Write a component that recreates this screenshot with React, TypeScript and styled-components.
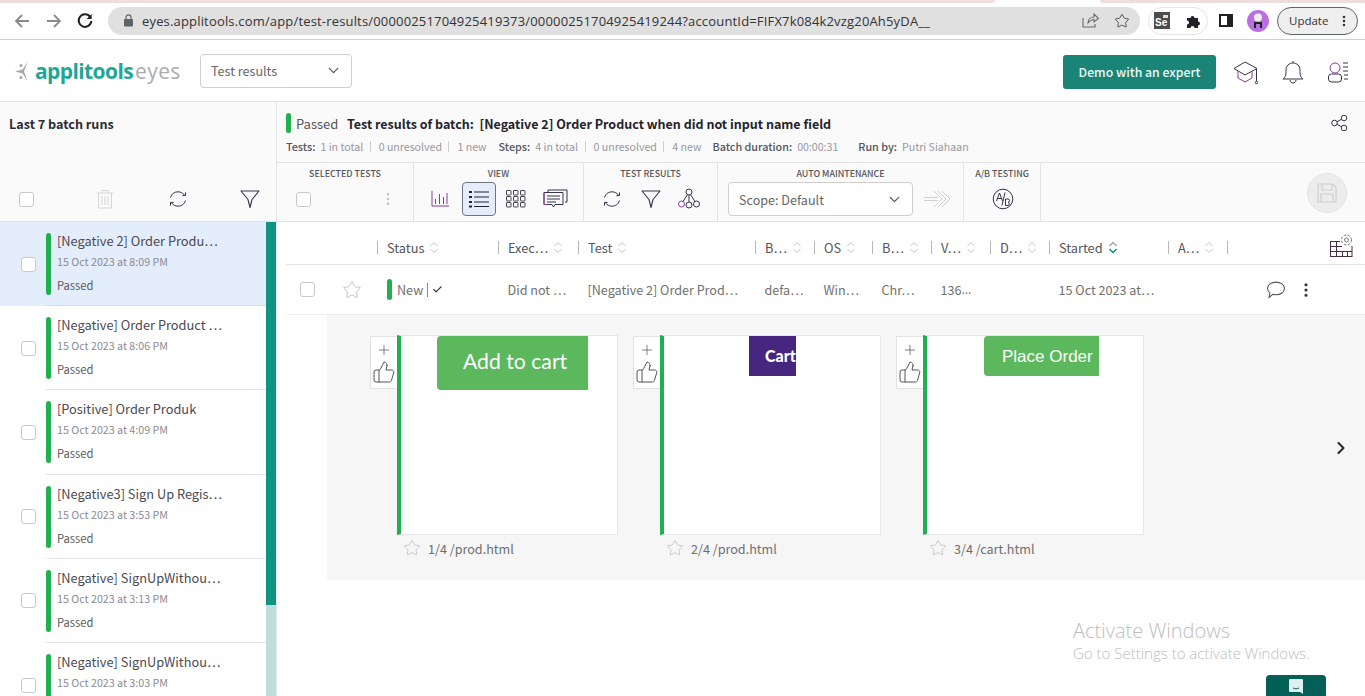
import React from "react";
import styled, { createGlobalStyle } from "styled-components";
import { Star, ChevronDown, ChevronRight, MoreVertical, Check, Plus, ThumbsUp } from "lucide-react";

const GlobalStyle = createGlobalStyle`
  html, body { margin: 0; padding: 0; background: #fff; }
  * { box-sizing: border-box; }
  body { font-family: "Noto Sans CJK KR", "Noto Sans", sans-serif; }
`;

const Page = styled.div`
  position: relative;
  width: 1365px;
  height: 696px;
  overflow: hidden;
  display: flex;
  flex-direction: column;
  color: #444;
`;

/* browser chrome */
const ChromeBar = styled.div`
  position: relative;
  height: 40px;
  flex: none;
  display: flex;
  align-items: center;
  padding: 3px 7px 1px 12px;
  border-bottom: 1px solid #d0d0d0;
  background: #fff;
  font-family: "Open Sans", sans-serif;
  & > * { flex: none; }
`;
const PinkStrip = styled.div<{ $left: number; $width: number; $radius: string }>`
  position: absolute;
  top: 0;
  left: ${(p) => p.$left}px;
  width: ${(p) => p.$width}px;
  height: 3px;
  background: #efdcdc;
  border-radius: ${(p) => p.$radius};
`;
const NavSlot = styled.span`
  width: 32px;
  height: 20px;
  display: flex;
  align-items: center;
`;
const AddressPill = styled.div`
  width: 1032px;
  height: 28px;
  border-radius: 14px;
  background: #e0e0e0;
  display: flex;
  align-items: center;
  padding: 0 10px 0 15px;
`;
const UrlText = styled.span`
  margin-left: 8px;
  font-family: "Open Sans", sans-serif;
  font-size: 13px;
  letter-spacing: 0.17px;
  color: #333;
  white-space: nowrap;
`;
const PillIcons = styled.div`
  margin-left: auto;
  display: flex;
  align-items: center;
  gap: 15px;
`;
const ExtensionPill = styled.div`
  width: 60px;
  height: 28px;
  margin-left: 8px;
  border: 1px solid #e4e4e4;
  border-radius: 14px;
  display: flex;
  align-items: center;
  justify-content: space-between;
  padding: 0 5px 0 5px;
`;
const SeBadge = styled.span`
  position: relative;
  width: 16px;
  height: 17px;
  background: #4d4d4d;
  color: #fff;
  font: bold 10px/1 "Liberation Sans", sans-serif;
  display: flex;
  align-items: flex-end;
  padding: 0 0 1px 1px;
  &::after {
    content: "";
    position: absolute;
    top: 3px;
    right: 2px;
    width: 5px;
    height: 3px;
    background: #ddd;
  }
`;
const SideIcon = styled.span`
  width: 14px;
  height: 13px;
  margin-left: 11px;
  border: 2px solid #202124;
  border-right-width: 6px;
  display: block;
`;
const Avatar = styled.span`
  width: 22px;
  height: 22px;
  margin-left: 14px;
  border-radius: 50%;
  background: #b96fe0;
  display: flex;
  align-items: center;
  justify-content: center;
`;
const UpdatePill = styled.div`
  width: 81px;
  height: 28px;
  margin-left: 8px;
  border: 1px solid #5f6368;
  border-radius: 14px;
  background: #efefef;
  display: flex;
  align-items: center;
  padding-left: 11px;
  font-size: 11.5px;
  color: #333;
  gap: 9px;
`;

/* app header */
const AppHeader = styled.header`
  height: 62px;
  flex: none;
  display: flex;
  align-items: center;
  padding: 2px 16px 0 15px;
  border-bottom: 1px solid #e6e6e6;
`;
const Logo = styled.div`
  width: 185px;
  display: flex;
  align-items: center;
  font-family: "Open Sans", sans-serif;
  font-size: 21px;
  line-height: 1;
`;
const LogoStrong = styled.span`
  margin-left: 7px;
  color: #1fa796;
  font-weight: 700;
  letter-spacing: -0.6px;
`;
const LogoLight = styled.span`
  margin-left: 2px;
  color: #a9adaf;
  font-weight: 400;
  letter-spacing: 0.4px;
`;
const SelectBox = styled.div<{ $width: number }>`
  width: ${(p) => p.$width}px;
  height: 34px;
  flex: none;
  border: 1px solid #cfcfcf;
  border-radius: 4px;
  background: #fff;
  display: flex;
  align-items: center;
  justify-content: space-between;
  padding: 0 9px 0 10px;
  font-size: 12.6px;
  color: #666;
`;
const HeaderSelect = styled(SelectBox)`
  margin-top: -2px;
`;
const DemoButton = styled.button`
  margin-left: auto;
  width: 153px;
  height: 34px;
  border: none;
  border-radius: 3px;
  background: #1a8577;
  color: #eafaf7;
  font-family: inherit;
  font-size: 12.3px;
  font-weight: 500;
`;
const HeaderIcons = styled.div`
  margin-left: 17px;
  display: flex;
  align-items: center;
  gap: 23px;
`;

/* body */
const Body = styled.div`
  flex: 1;
  min-height: 0;
  display: flex;
`;
const Sidebar = styled.aside`
  width: 277px;
  flex: none;
  display: flex;
  flex-direction: column;
  border-right: 1px solid #e4e4e4;
`;
const SidebarTop = styled.div`
  height: 120px;
  flex: none;
  background: #fafafa;
  border-bottom: 1px solid #e4e4e4;
  padding: 12px 0 0 9px;
  display: flex;
  flex-direction: column;
`;
const SidebarTitle = styled.div`
  font-size: 12.6px;
  line-height: 20px;
  font-weight: 700;
  color: #2b2b33;
`;
const SidebarTools = styled.div`
  margin-top: auto;
  height: 44px;
  display: flex;
  align-items: center;
  padding-left: 10px;
`;
const ToolSlot = styled.span<{ $gap: number }>`
  display: flex;
  flex: none;
  margin-left: ${(p) => p.$gap}px;
`;
const Checkbox = styled.span`
  display: block;
  width: 15px;
  height: 15px;
  flex: none;
  border: 1px solid #c9c9c9;
  border-radius: 3px;
  background: #fff;
`;
const BatchScroller = styled.div`
  flex: 1;
  min-height: 0;
  display: flex;
  overflow: hidden;
`;
const BatchList = styled.div`
  width: 266px;
  flex: none;
`;
const ScrollTrack = styled.div`
  width: 10px;
  background: #bfdedb;
`;
const ScrollThumb = styled.div`
  height: 383px;
  background: #119383;
`;
const BatchRow = styled.div<{ $active?: boolean }>`
  position: relative;
  height: 84.2px;
  display: flex;
  align-items: center;
  padding-left: 21px;
  background: ${(p) => (p.$active ? "#e3edfb" : "#fff")};
`;
const BatchBody = styled.div<{ $active?: boolean }>`
  height: 100%;
  flex: 1;
  margin-left: 10px;
  padding: 11px 0 0 0;
  display: flex;
  border-bottom: 1px solid ${(p) => (p.$active ? "#d5dde8" : "#e6e6e6")};
`;
const StatusBar = styled.span<{ $height: number }>`
  display: block;
  width: 5px;
  height: ${(p) => p.$height}px;
  flex: none;
  border-radius: 3px;
  background: #1fb14f;
`;
const BatchText = styled.div`
  margin: -1px 0 0 6px;
`;
const BatchName = styled.div`
  font-size: 12.8px;
  line-height: 18px;
  color: #4a4a52;
  white-space: nowrap;
`;
const BatchDate = styled.div`
  margin-top: 4px;
  font-size: 10.7px;
  line-height: 16px;
  color: #8b8b93;
`;
const BatchStatus = styled.div`
  margin-top: 7px;
  font-size: 11.2px;
  line-height: 16px;
  color: #5c5c5c;
`;

const Content = styled.main`
  flex: 1;
  min-width: 0;
  display: flex;
  flex-direction: column;
`;
const BatchHeader = styled.div`
  position: relative;
  height: 61px;
  flex: none;
  background: #fafafa;
  padding: 11px 0 0 9px;
  border-bottom: 1px solid #e4e4e4;
`;
const HeaderLine = styled.div`
  display: flex;
  align-items: center;
  height: 20px;
`;
const PassedLabel = styled.span`
  margin-left: 5px;
  width: 51px;
  font-size: 13px;
  color: #555;
`;
const BatchTitle = styled.span`
  font-size: 12.5px;
  font-weight: 700;
  color: #23232b;
  white-space: pre;
`;
const ShareSlot = styled.span`
  position: absolute;
  top: 13px;
  right: 17px;
  display: flex;
`;
const StatsLine = styled.div`
  display: flex;
  align-items: center;
  margin-top: 4px;
  height: 18px;
  white-space: nowrap;
`;
const StatKey = styled.span<{ $gap?: number }>`
  font-size: 10.8px;
  font-weight: 500;
  color: #55555c;
  margin-left: ${(p) => p.$gap || 0}px;
`;
const StatValue = styled.span`
  margin-left: 5px;
  font-size: 10.6px;
  color: #98989f;
`;
const StatDivider = styled.span`
  width: 1px;
  height: 11px;
  margin: 0 3px 0 6.5px;
  background: #cfcfcf;
`;

const Toolbar = styled.div`
  height: 59px;
  flex: none;
  display: flex;
  background: #fafafa;
  border-bottom: 1px solid #e4e4e4;
`;
const ToolSection = styled.section<{ $width: number }>`
  width: ${(p) => p.$width}px;
  flex: none;
  display: flex;
  flex-direction: column;
  align-items: center;
  border-right: 1px solid #e4e4e4;
  padding-top: 4px;
`;
const ToolLabel = styled.div`
  font-size: 8.9px;
  line-height: 14px;
  font-weight: 500;
  color: #55555c;
  white-space: nowrap;
`;
const ToolIcons = styled.div<{ $start?: boolean; $shift?: number }>`
  margin-top: 1px;
  height: 34px;
  width: 100%;
  display: flex;
  align-items: center;
  justify-content: ${(p) => (p.$start ? "flex-start" : "center")};
  padding-left: ${(p) => (p.$start ? 19 : Math.max(p.$shift || 0, 0))}px;
  padding-right: ${(p) => Math.max(-(p.$shift || 0), 0)}px;
`;
const ToolIconButton = styled.span<{ $selected?: boolean; $gap?: number }>`
  width: 34px;
  height: 34px;
  margin-left: ${(p) => p.$gap || 0}px;
  display: flex;
  align-items: center;
  justify-content: center;
  border-radius: 4px;
  border: 1px solid ${(p) => (p.$selected ? "#6f7580" : "transparent")};
  background: ${(p) => (p.$selected ? "#e3edfb" : "transparent")};
`;
const SaveCircle = styled.span`
  width: 40px;
  height: 40px;
  margin: 10px 0 0 266px;
  border-radius: 50%;
  background: #ececec;
  border: 1px solid #e4e4e4;
  display: flex;
  align-items: center;
  justify-content: center;
`;

const COLUMNS = "91px 121px 80px 177px 59px 58px 59px 59px 59px 119px 59px 1fr";
const TableHead = styled.div`
  margin-left: 9px;
  height: 43px;
  flex: none;
  display: grid;
  grid-template-columns: ${COLUMNS};
  align-items: center;
  border-bottom: 1px solid #e4e4e4;
  padding-top: 8px;
`;
const HeadCell = styled.div<{ $plain?: boolean }>`
  display: flex;
  align-items: center;
  gap: 5px;
  height: 13px;
  padding-left: 9px;
  border-left: ${(p) => (p.$plain ? "none" : "1px solid #b8b8b8")};
  font-size: 12.8px;
  color: #55555c;
  white-space: nowrap;
`;
const TableRow = styled.div`
  margin-left: 9px;
  height: 50px;
  flex: none;
  display: grid;
  grid-template-columns: ${COLUMNS};
  align-items: center;
  border-bottom: 1px solid #ececec;
`;
const RowCell = styled.div`
  display: flex;
  align-items: center;
  padding-left: 9.5px;
  font-size: 12.6px;
  color: #6f6f6f;
  white-space: nowrap;
`;
const StatusCell = styled(RowCell)`
  padding-left: 10px;
`;
const LatinDots = styled.span`
  font-family: "Open Sans", sans-serif;
`;
const SelectCell = styled.div`
  display: flex;
  align-items: center;
  padding-left: 14px;
`;
const NewLabel = styled.span`
  margin-left: 5px;
  padding-right: 4px;
  border-right: 1px solid #8a8a8a;
  line-height: 14px;
`;
const CheckMark = styled.span`
  display: flex;
  margin-left: 4px;
`;
const RowActions = styled.div`
  display: flex;
  align-items: center;
  justify-content: flex-end;
  padding-right: 50px;
  gap: 11px;
`;
const GridSettings = styled.div`
  width: 100%;
  display: flex;
  justify-content: flex-end;
  padding-right: 12px;
  margin-top: -3px;
`;

const StepsPanel = styled.div`
  margin-left: 50px;
  height: 265px;
  flex: none;
  background: #f6f6f6;
  padding: 20px 0 0 43px;
  display: flex;
  gap: 15px;
`;
const StepItem = styled.div`
  display: flex;
  align-items: flex-start;
`;
const StepTools = styled.div`
  width: 27px;
  height: 53px;
  margin-top: 1px;
  border: 1px solid #e2e2e2;
  border-right: none;
  background: #fff;
  display: flex;
  flex-direction: column;
  align-items: center;
  padding-top: 5px;
  gap: 2px;
`;
const StepColumn = styled.div`
  width: 221px;
`;
const StepCard = styled.div`
  height: 200px;
  background: #fff;
  border: 1px solid #e8e8e8;
  border-left: 4px solid #1fb14f;
  overflow: hidden;
`;
const Shot = styled.div<{ $left: number; $width: number; $height: number; $bg: string }>`
  width: ${(p) => p.$width}px;
  height: ${(p) => p.$height}px;
  margin-left: ${(p) => p.$left}px;
  background: ${(p) => p.$bg};
  display: flex;
  align-items: center;
  overflow: hidden;
  color: #fff;
  white-space: nowrap;
`;
const RoundedShot = styled(Shot)`
  border-radius: 4px 0 0 4px;
`;
const ShotLabel = styled.span<{ $size: number; $pad: number; $font: string; $weight?: number; $lift: number }>`
  padding: ${(p) => Math.max(-p.$lift, 0)}px 0 ${(p) => Math.max(p.$lift, 0)}px ${(p) => p.$pad}px;
  font-family: ${(p) => p.$font};
  font-size: ${(p) => p.$size}px;
  font-weight: ${(p) => p.$weight || 400};
`;
const StepCaption = styled.div`
  margin: 4px 0 0 6px;
  display: flex;
  align-items: center;
  gap: 7px;
  height: 18px;
  font-size: 12.6px;
  color: #6e6e6e;
`;
const NextArrow = styled.span`
  position: absolute;
  left: 1331px;
  top: 438px;
  display: flex;
`;
const Watermark = styled.div`
  position: absolute;
  left: 1073px;
  top: 619px;
  font-family: "Open Sans", sans-serif;
  color: #bdbdbd;
`;
const WatermarkTitle = styled.div`
  font-size: 20px;
  line-height: 24px;
  font-weight: 300;
`;
const WatermarkText = styled.div`
  font-size: 15px;
  line-height: 21px;
  font-weight: 300;
  white-space: nowrap;
`;
const ChatTab = styled.div`
  position: absolute;
  left: 1266px;
  top: 675px;
  width: 60px;
  height: 21px;
  border-radius: 4px 4px 0 0;
  background: #045f57;
  display: flex;
  justify-content: center;
  padding-top: 3px;
`;

const INK = "#34344a";

function Sync() {
  return (
    <svg width="20" height="20" viewBox="0 0 20 20" fill="none" stroke={INK} strokeWidth="1">
      <path d="M2.5 8.5C3.4 5 6.4 2.8 10 2.8c2.7 0 5 1.2 6.5 3.4" />
      <path d="M17.5 3.4v3.2h-3.1" />
      <path d="M17.5 11.5c-.9 3.5-3.9 5.7-7.5 5.7-2.7 0-5-1.2-6.5-3.4" />
      <path d="M2.5 16.6v-3.2h3.1" />
    </svg>
  );
}
function Funnel() {
  return (
    <svg width="20" height="20" viewBox="0 0 20 20" fill="none" stroke={INK} strokeWidth="1.1">
      <path d="M1 2h18l-7 8.5-2 8-2-8z" strokeLinejoin="round" />
    </svg>
  );
}
function SortIcon({ active }: { active?: boolean }) {
  return (
    <svg width="10" height="13" viewBox="0 0 10 13" fill="none" strokeWidth={active ? 1.4 : 1}>
      <path d="M1.5 5 5 1.5 8.5 5" stroke={active ? "#9aa" : "#c4c4c4"} />
      <path d="M1.5 8 5 11.5 8.5 8" stroke={active ? "#0c8a7c" : "#c4c4c4"} />
    </svg>
  );
}
function StarOutline({ size }: { size: number }) {
  return <Star size={size} color="#bbb" strokeWidth={1} />;
}
function StepTool() {
  return (
    <StepTools>
      <Plus size={16} color="#444" strokeWidth={1} />
      <ThumbsUp size={24} color="#555" strokeWidth={1} />
    </StepTools>
  );
}

const batches = [
  { name: "[Negative 2] Order Produ…", date: "15 Oct 2023 at 8:09 PM", active: true },
  { name: "[Negative] Order Product …", date: "15 Oct 2023 at 8:06 PM" },
  { name: "[Positive] Order Produk", date: "15 Oct 2023 at 4:09 PM" },
  { name: "[Negative3] Sign Up Regis…", date: "15 Oct 2023 at 3:53 PM" },
  { name: "[Negative] SignUpWithou…", date: "15 Oct 2023 at 3:13 PM" },
  { name: "[Negative] SignUpWithou…", date: "15 Oct 2023 at 3:03 PM" },
];

const heads = ["Status", "Exec…", "Test", "B…", "OS", "B…", "V…", "D…"];

export default function App() {
  return (
    <Page>
      <GlobalStyle />
      <ChromeBar>
        <PinkStrip $left={0} $width={995} $radius="0 0 8px 0" />
        <PinkStrip $left={1100} $width={265} $radius="0 0 0 8px" />
        <NavSlot>
          <svg width="20" height="16" viewBox="0 0 20 16" fill="none" stroke="#8a8a8a" strokeWidth="1.8">
            <path d="M17 8H4M10 2 4 8l6 6" />
          </svg>
        </NavSlot>
        <NavSlot>
          <svg width="20" height="16" viewBox="0 0 20 16" fill="none" stroke="#8a8a8a" strokeWidth="1.8">
            <path d="M3 8h13M10 2l6 6-6 6" />
          </svg>
        </NavSlot>
        <NavSlot>
          <svg width="18" height="18" viewBox="0 0 18 18" fill="none" stroke="#222" strokeWidth="2">
            <path d="M14.5 5.5A6.3 6.3 0 1 0 15.3 9" />
            <path d="M15.6 2v5h-5z" fill="#222" stroke="none" />
          </svg>
        </NavSlot>
        <AddressPill>
          <svg width="11" height="13" viewBox="0 0 11 13" fill="#5f6368">
            <rect x="1" y="5" width="9" height="7.5" rx="1" />
            <path d="M3 5V3.4a2.5 2.5 0 0 1 5 0V5" fill="none" stroke="#5f6368" strokeWidth="1.2" />
          </svg>
          <UrlText>
            eyes.applitools.com/app/test-results/00000251704925419373/00000251704925419244?accountId=FIFX7k084k2vzg20Ah5yDA__
          </UrlText>
          <PillIcons>
            <svg width="17" height="15" viewBox="0 0 17 15" fill="none" stroke="#6a6a6a" strokeWidth="1.1">
              <path d="M1 5v9h12v-3M6 10c0-4 3-6 6-6V1l4.5 4.5L12 9V6.5C9.5 6.5 7.5 8 6 10z" />
            </svg>
            <Star size={16} color="#555" strokeWidth={1.5} />
          </PillIcons>
        </AddressPill>
        <ExtensionPill>
          <SeBadge>Se</SeBadge>
          <svg width="16" height="16" viewBox="0 0 16 16" fill="#202124">
            <path d="M1 5h3.500a2 2 0 1 1 4 0H12v3.500a2 2 0 1 1 0 4V15H8.500a2 2 0 1 0-4 0H1v-3.500a2 2 0 1 0 0-4z" />
          </svg>
        </ExtensionPill>
        <SideIcon />
        <Avatar>
          <svg width="12" height="16" viewBox="0 0 12 16">
            <circle cx="6" cy="4.5" r="4" fill="#eee" />
            <path d="M2 15V9h8v6H8v-4H4v4z" fill="#222" />
          </svg>
        </Avatar>
        <UpdatePill>
          Update
          <MoreVertical size={14} color="#333" strokeWidth={2.4} />
        </UpdatePill>
      </ChromeBar>

      <AppHeader>
        <Logo>
          <svg width="13" height="19" viewBox="0 0 13 19" fill="#a4a8a8">
            <path d="M12.500 0 7.500 7.500 0 9.500l7.500 2 5 7.500-3.500-9.500z" />
            <circle cx="6" cy="3.500" r="1.500" />
            <circle cx="6" cy="15.500" r="1.500" />
          </svg>
          <LogoStrong>applitools</LogoStrong>
          <LogoLight>eyes</LogoLight>
        </Logo>
        <HeaderSelect $width={152}>
          Test results
          <ChevronDown size={17} color="#555" strokeWidth={1.8} />
        </HeaderSelect>
        <DemoButton>Demo with an expert</DemoButton>
        <HeaderIcons>
          <svg width="26" height="26" viewBox="0 0 26 26" fill="none" stroke={INK} strokeWidth="1">
            <path d="M1 9.500 12 3l12 6.500L12 16z" />
            <path d="M5 12v7l7 4 7-4v-7" stroke="#8a3d96" />
            <path d="M23.500 10v12" />
            <circle cx="23.500" cy="23.500" r="1.200" />
          </svg>
          <svg width="22" height="24" viewBox="0 0 22 24" fill="none" stroke={INK} strokeWidth="1">
            <path d="M1 19c3-2 3-5 3-9 0-4 3-7 7-7s7 3 7 7c0 4 0 7 3 9z" />
            <path d="M8 20c0 4 6 4 6 0M11 1v2" />
          </svg>
          <svg width="22" height="22" viewBox="0 0 22 22" fill="none" stroke={INK} strokeWidth="1">
            <circle cx="8" cy="7" r="5" stroke="#8a3d96" />
            <rect x="1.500" y="13" width="13" height="8" rx="3" />
            <path d="M16 2h5M16 6h5M16 10h5M17 14h4M17 18h4" />
          </svg>
        </HeaderIcons>
      </AppHeader>

      <Body>
        <Sidebar>
          <SidebarTop>
            <SidebarTitle>Last 7 batch runs</SidebarTitle>
            <SidebarTools>
              <Checkbox />
              <ToolSlot $gap={62}>
                <svg width="18" height="20" viewBox="0 0 18 20" fill="none" stroke="#d4d4d4" strokeWidth="1">
                  <path d="M1 4h16M6 4V1.500h6V4M2.500 4v15h13V4M6 7v9M9 7v9M12 7v9" />
                </svg>
              </ToolSlot>
              <ToolSlot $gap={54}>
                <Sync />
              </ToolSlot>
              <ToolSlot $gap={52}>
                <Funnel />
              </ToolSlot>
            </SidebarTools>
          </SidebarTop>
          <BatchScroller>
            <BatchList>
              {batches.map((batch, i) => (
                <BatchRow key={i} $active={batch.active}>
                  <Checkbox />
                  <BatchBody $active={batch.active}>
                    <StatusBar $height={62} />
                    <BatchText>
                      <BatchName>{batch.name}</BatchName>
                      <BatchDate>{batch.date}</BatchDate>
                      <BatchStatus>Passed</BatchStatus>
                    </BatchText>
                  </BatchBody>
                </BatchRow>
              ))}
            </BatchList>
            <ScrollTrack>
              <ScrollThumb />
            </ScrollTrack>
          </BatchScroller>
        </Sidebar>

        <Content>
          <BatchHeader>
            <HeaderLine>
              <StatusBar $height={20} />
              <PassedLabel>Passed</PassedLabel>
              <BatchTitle>Test results of batch:  [Negative 2] Order Product when did not input name field</BatchTitle>
            </HeaderLine>
            <StatsLine>
              <StatKey>Tests:</StatKey>
              <StatValue>1 in total</StatValue>
              <StatDivider />
              <StatValue>0 unresolved</StatValue>
              <StatDivider />
              <StatValue>1 new</StatValue>
              <StatKey $gap={12}>Steps:</StatKey>
              <StatValue>4 in total</StatValue>
              <StatDivider />
              <StatValue>0 unresolved</StatValue>
              <StatDivider />
              <StatValue>4 new</StatValue>
              <StatKey $gap={11}>Batch duration:</StatKey>
              <StatValue>00:00:31</StatValue>
              <StatKey $gap={20}>Run by:</StatKey>
              <StatValue>Putri Siahaan</StatValue>
            </StatsLine>
            <ShareSlot>
              <svg width="17" height="16" viewBox="0 0 17 16" fill="none" stroke={INK} strokeWidth="1">
                <circle cx="3.500" cy="8" r="2.800" />
                <circle cx="13" cy="3" r="2.800" />
                <circle cx="13" cy="13" r="2.800" />
                <path d="M6 6.700 10.500 4.300M6 9.300 10.500 11.700" />
              </svg>
            </ShareSlot>
          </BatchHeader>

          <Toolbar>
            <ToolSection $width={137}>
              <ToolLabel>SELECTED TESTS</ToolLabel>
              <ToolIcons $start>
                <Checkbox />
                <ToolSlot $gap={69}>
                  <MoreVertical size={16} color="#c4c4c4" strokeWidth={2} />
                </ToolSlot>
              </ToolIcons>
            </ToolSection>
            <ToolSection $width={170}>
              <ToolLabel>VIEW</ToolLabel>
              <ToolIcons $shift={-2}>
                <ToolIconButton>
                  <svg width="18" height="18" viewBox="0 0 18 18" fill="none" stroke="#8a3d96" strokeWidth="1">
                    <path d="M1 1v15h17M4.500 9v5M8.500 4v10M12.500 7v7M16 3v11" />
                  </svg>
                </ToolIconButton>
                <ToolIconButton $selected $gap={5}>
                  <svg width="21" height="18" viewBox="0 0 21 18" fill="none" stroke="#23233a" strokeWidth="1.200">
                    <path d="M5 2h15M5 7h15M5 12h15M5 16.500h15" />
                    <path d="M0 2h3M0 7h3M0 12h3M0 16.500h3" strokeWidth="2" />
                  </svg>
                </ToolIconButton>
                <ToolIconButton $gap={3}>
                  <svg width="20" height="18" viewBox="0 0 20 18" fill="none" stroke="#44444f" strokeWidth="1">
                    {[0, 7, 14].map((x) =>
                      [0.5, 6.5, 12.5].map((y) => (
                        <rect key={`${x}-${y}`} x={x + 0.5} y={y} width="4.500" height="4.500" rx="0.500" />
                      ))
                    )}
                  </svg>
                </ToolIconButton>
                <ToolIconButton $gap={5}>
                  <svg width="25" height="21" viewBox="0 0 25 21" fill="none" stroke={INK} strokeWidth="1">
                    <path d="M5 3V1h19v12h-2" />
                    <path d="M1 15.500V3.500h19v12H12l-1.500 2.500L9 15.500z" />
                    <path d="M1 3.500v12h3" stroke="#8a3d96" />
                    <path d="M4 7h13M4 10h13M4 13h9" />
                  </svg>
                </ToolIconButton>
              </ToolIcons>
            </ToolSection>
            <ToolSection $width={134}>
              <ToolLabel>TEST RESULTS</ToolLabel>
              <ToolIcons $shift={2}>
                <Sync />
                <ToolSlot $gap={19}>
                  <Funnel />
                </ToolSlot>
                <ToolSlot $gap={16}>
                  <svg width="24" height="22" viewBox="0 0 24 22" fill="none" stroke={INK} strokeWidth="1">
                    <circle cx="12" cy="4" r="3" />
                    <circle cx="4.500" cy="16" r="3" stroke="#8a3d96" />
                    <circle cx="12" cy="17" r="3" />
                    <circle cx="19.500" cy="16" r="3" />
                    <path d="M12 7v7M10.500 6.500 6 13.500M13.500 6.500l4.500 7" />
                  </svg>
                </ToolSlot>
              </ToolIcons>
            </ToolSection>
            <ToolSection $width={246}>
              <ToolLabel>AUTO MAINTENANCE</ToolLabel>
              <ToolIcons $shift={-2}>
                <SelectBox $width={185}>
                  Scope: Default
                  <ChevronDown size={17} color="#555" strokeWidth={1.8} />
                </SelectBox>
                <ToolSlot $gap={10}>
                  <svg width="28" height="20" viewBox="0 0 28 20" fill="none" stroke="#cfcfcf" strokeWidth="1">
                    <path d="M1 8.500h14M1 11.500h14M11 2l8 8-8 8M15 2l8 8-8 8M19 2l8 8-8 8" />
                  </svg>
                </ToolSlot>
              </ToolIcons>
            </ToolSection>
            <ToolSection $width={77}>
              <ToolLabel>A/B TESTING</ToolLabel>
              <ToolIcons $shift={2}>
                <svg width="22" height="22" viewBox="0 0 22 22" fill="none" stroke={INK} strokeWidth="1">
                  <circle cx="11" cy="11" r="9.800" />
                  <path d="M4.500 13 7.500 5l3 8M5.500 10.500h4M13 4.500l-3 13M13.500 11v6.500h2.500a1.700 1.700 0 0 0 0-3.300 1.600 1.600 0 0 0 0-3.200z" />
                </svg>
              </ToolIcons>
            </ToolSection>
            <SaveCircle>
              <svg width="20" height="20" viewBox="0 0 20 20" fill="none" stroke="#cfcfcf" strokeWidth="1.200">
                <path d="M1 1h15l3 3v15H1z" />
                <path d="M5 1v6h10V1M4 19v-8h12v8" />
              </svg>
            </SaveCircle>
          </Toolbar>

          <TableHead>
            <HeadCell $plain />
            {heads.map((label, i) => (
              <HeadCell key={i}>
                {label}
                <SortIcon />
              </HeadCell>
            ))}
            <HeadCell>
              Started
              <SortIcon active />
            </HeadCell>
            <HeadCell>
              A…
              <SortIcon />
            </HeadCell>
            <HeadCell>
              <GridSettings>
                <svg width="24" height="24" viewBox="0 0 24 24" fill="none" strokeWidth="1">
                  <path d="M1 7.500h10M1 12.500h12M1 17.500h22M1 22.500h22M1.500 7v16M7.500 7v16M13.500 17v6M18.500 17v6M23 12v11" stroke="#4a2b44" />
                  <circle cx="17.500" cy="6" r="5" stroke="#777" strokeDasharray="2.500 1.500" />
                  <circle cx="17.500" cy="6" r="2" stroke="#777" />
                </svg>
              </GridSettings>
            </HeadCell>
          </TableHead>
          <TableRow>
            <SelectCell>
              <Checkbox />
              <ToolSlot $gap={27}>
                <StarOutline size={20} />
              </ToolSlot>
            </SelectCell>
            <StatusCell>
              <StatusBar $height={21} />
              <NewLabel>New</NewLabel>
              <CheckMark>
                <Check size={11} color="#333" strokeWidth={2.4} />
              </CheckMark>
            </StatusCell>
            <RowCell>Did not …</RowCell>
            <RowCell>[Negative 2] Order Prod…</RowCell>
            <RowCell>defa…</RowCell>
            <RowCell>Win…</RowCell>
            <RowCell>Chr…</RowCell>
            <RowCell>
              136<LatinDots>…</LatinDots>
            </RowCell>
            <RowCell />
            <RowCell>15 Oct 2023 at…</RowCell>
            <RowCell />
            <RowActions>
              <svg width="20" height="19" viewBox="0 0 19 18" fill="none" stroke="#555" strokeWidth="1">
                <path d="M9.500 2c4.500 0 8 2.500 8 6s-3.500 6-8 6c-1 0-2-.1-3-.5L3 16.500l.7-4C2.300 11.400 1.500 9.800 1.500 8c0-3.500 3.500-6 8-6z" />
              </svg>
              <MoreVertical size={18} color="#333" strokeWidth={2.2} />
            </RowActions>
          </TableRow>

          <StepsPanel>
            <StepItem>
              <StepTool />
              <StepColumn>
                <StepCard>
                  <RoundedShot $left={36} $width={151} $height={54} $bg="#5cb85c">
                    <ShotLabel $size={21.2} $pad={26} $lift={4} $font='"Lato", sans-serif'>Add to cart</ShotLabel>
                  </RoundedShot>
                </StepCard>
                <StepCaption>
                  <StarOutline size={18} />
                  1/4 /prod.html
                </StepCaption>
              </StepColumn>
            </StepItem>
            <StepItem>
              <StepTool />
              <StepColumn>
                <StepCard>
                  <Shot $left={85} $width={47} $height={40} $bg="#46267f">
                    <ShotLabel $size={16} $pad={16} $lift={2} $font='"Lato", sans-serif' $weight={900}>Cart</ShotLabel>
                  </Shot>
                </StepCard>
                <StepCaption>
                  <StarOutline size={18} />
                  2/4 /prod.html
                </StepCaption>
              </StepColumn>
            </StepItem>
            <StepItem>
              <StepTool />
              <StepColumn>
                <StepCard>
                  <RoundedShot $left={57} $width={115} $height={40} $bg="#5cb85c">
                    <ShotLabel $size={17} $pad={18} $lift={-2} $font='"Liberation Sans", sans-serif'>Place Order</ShotLabel>
                  </RoundedShot>
                </StepCard>
                <StepCaption>
                  <StarOutline size={18} />
                  3/4 /cart.html
                </StepCaption>
              </StepColumn>
            </StepItem>
          </StepsPanel>
        </Content>
      </Body>

      <NextArrow>
        <ChevronRight size={20} color="#333" strokeWidth={2.6} />
      </NextArrow>
      <Watermark>
        <WatermarkTitle>Activate Windows</WatermarkTitle>
        <WatermarkText>Go to Settings to activate Windows.</WatermarkText>
      </Watermark>
      <ChatTab>
        <svg width="16" height="17" viewBox="0 0 16 17">
          <path d="M1 2a1 1 0 0 1 1-1h12a1 1 0 0 1 1 1v14l-3-2H2a1 1 0 0 1-1-1z" fill="#dfeeee" />
          <path d="M5 10c2 1 4 1 6 0" stroke="#045f57" fill="none" />
        </svg>
      </ChatTab>
    </Page>
  );
}
